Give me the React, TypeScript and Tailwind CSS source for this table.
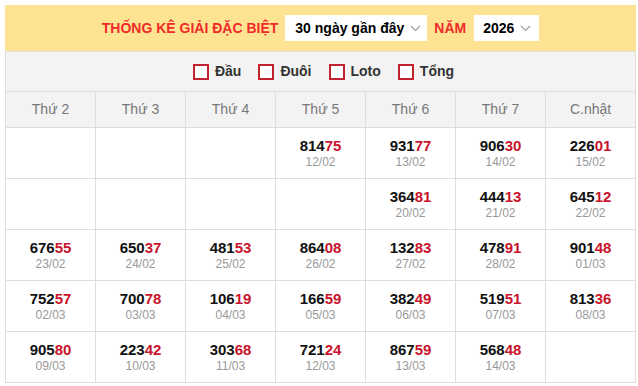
import React from "react";

type Cell = { n: string; d: string } | null;

const rows: Cell[][] = [
  [null, null, null, { n: "81475", d: "12/02" }, { n: "93177", d: "13/02" }, { n: "90630", d: "14/02" }, { n: "22601", d: "15/02" }],
  [null, null, null, null, { n: "36481", d: "20/02" }, { n: "44413", d: "21/02" }, { n: "64512", d: "22/02" }],
  [{ n: "67655", d: "23/02" }, { n: "65037", d: "24/02" }, { n: "48153", d: "25/02" }, { n: "86408", d: "26/02" }, { n: "13283", d: "27/02" }, { n: "47891", d: "28/02" }, { n: "90148", d: "01/03" }],
  [{ n: "75257", d: "02/03" }, { n: "70078", d: "03/03" }, { n: "10619", d: "04/03" }, { n: "16659", d: "05/03" }, { n: "38249", d: "06/03" }, { n: "51951", d: "07/03" }, { n: "81336", d: "08/03" }],
  [{ n: "90580", d: "09/03" }, { n: "22342", d: "10/03" }, { n: "30368", d: "11/03" }, { n: "72124", d: "12/03" }, { n: "86759", d: "13/03" }, { n: "56848", d: "14/03" }, null],
];

const days = ["Thứ 2", "Thứ 3", "Thứ 4", "Thứ 5", "Thứ 6", "Thứ 7", "C.nhật"];

function Chevron() {
  return (
    <svg width="11" height="7" viewBox="0 0 11 7" className="shrink-0">
      <polyline points="1,1 5.5,5.5 10,1" fill="none" stroke="#a0a0a0" strokeWidth="1.2" />
    </svg>
  );
}

function Check({ label }: { label: string }) {
  return (
    <div className="flex items-center gap-[6px]">
      <div className="w-[16px] h-[16px] border-2 border-[#c1202f] bg-white" />
      <span className="text-[14px] font-bold text-[#333]">{label}</span>
    </div>
  );
}

export default function App() {
  return (
    <div className="bg-white w-[638px] h-[386px]" style={{ fontFamily: '"Liberation Sans", Arial, sans-serif' }}>
      <div className="ml-[5px] pt-[5px] w-[631px]">
        <div className="h-[46px] bg-[#fee393] flex items-center justify-center pl-[0px]">
          <span className="text-[14px] font-bold text-[#ee2a2a] mr-[7px]">THỐNG KÊ GIẢI ĐẶC BIỆT</span>
          <div className="w-[142px] h-[26px] bg-white flex items-center justify-between pl-[10px] pr-[6px] mr-[7px]">
            <span className="text-[14px] font-bold text-black">30 ngày gần đây</span>
            <Chevron />
          </div>
          <span className="text-[14px] font-bold text-[#ee2a2a] mr-[8px]">NĂM</span>
          <div className="w-[65px] h-[26px] bg-white flex items-center justify-between pl-[9px] pr-[8px]">
            <span className="text-[14px] font-bold text-black">2026</span>
            <Chevron />
          </div>
        </div>
        <div className="h-[40px] bg-[#f3f3f3] border-x border-t border-[#dddddd] flex items-center justify-center gap-[17px] pl-[6px]">
          <Check label="Đầu" />
          <Check label="Đuôi" />
          <Check label="Loto" />
          <Check label="Tổng" />
        </div>
        <div className="grid grid-cols-7 border-l border-t border-[#dddddd]">
          {days.map((d) => (
            <div key={d} className="h-[36px] bg-[#f3f3f3] border-r border-b border-[#dddddd] flex items-center justify-center text-[14px] text-[#777]">
              {d}
            </div>
          ))}
          {rows.flatMap((r, ri) =>
            r.map((c, ci) => (
              <div key={ri + "-" + ci} className="h-[51px] border-r border-b border-[#dddddd] flex flex-col items-center justify-center">
                {c && (
                  <>
                    <div className="text-[15px] font-bold leading-[17px] text-[#111]">
                      {c.n.slice(0, 3)}
                      <span className="text-[#c8142c]">{c.n.slice(3)}</span>
                    </div>
                    <div className="text-[12px] leading-[15px] text-[#999] mt-[1px]">{c.d}</div>
                  </>
                )}
              </div>
            ))
          )}
        </div>
      </div>
    </div>
  );
}
